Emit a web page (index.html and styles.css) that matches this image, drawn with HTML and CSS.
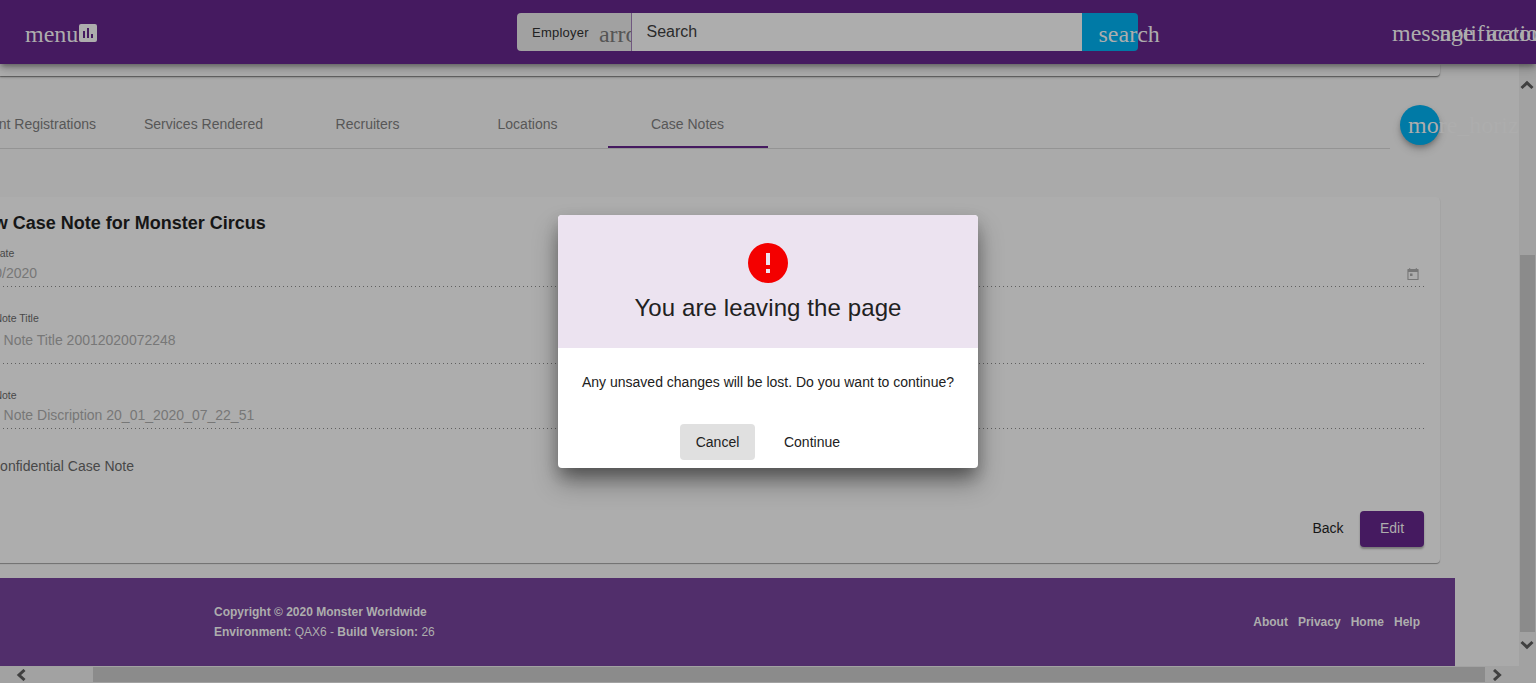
FILE: index.html
```html
<!DOCTYPE html>
<html lang="en">
<head>
<meta charset="utf-8">
<title>Case Notes</title>
<link rel="stylesheet" href="styles.css">
</head>
<body>
<header class="topbar">
  <div class="brand">
    <span class="ligature">menu</span>
    <svg class="brand-icon" viewBox="3 3 18 18"><path fill="#adadad" fill-rule="evenodd" d="M19 3H5a2 2 0 0 0-2 2v14a2 2 0 0 0 2 2h14a2 2 0 0 0 2-2V5a2 2 0 0 0-2-2zM9 17H7v-7h2v7zm4 0h-2V7h2v10zm4 0h-2v-4h2v4z"/></svg>
  </div>
  <div class="searchbox">
    <div class="scope"><span>Employer</span><i class="ligature">arrow_drop_down</i></div>
    <div class="query">Search</div>
    <div class="go ligature">search</div>
  </div>
  <nav class="actions ligature"><span>message</span><span>notifications</span><span>account_circle</span></nav>
</header>
<div class="viewport">
  <main class="page">
    <div class="upper-card"></div>
    <div class="tabrow">
      <nav class="tabs">
        <a class="tab first">Event Registrations</a><a class="tab">Services Rendered</a><a class="tab">Recruiters</a><a class="tab">Locations</a><a class="tab active">Case Notes</a>
      </nav>
      <div class="fab ligature">more_horiz</div>
    </div>
    <section class="card">
      <h2>View Case Note for Monster Circus</h2>
      <div class="field date"><label>Note Date</label><div class="value">01/20/2020</div>
        <svg class="calendar" viewBox="0 0 12 12"><path fill="#777" fill-rule="evenodd" d="M2.2 0h1v1h5.600V0h1v1H11c.4 0 .6.2.6.6v9.800c0 .4-.2.6-.6.6H1c-.4 0-.6-.2-.6-.6V1.600C.4 1.200.6 1 1 1h1.200zM1.500 4v6.900h9V4zM3 5.500h2.500V8H3z"/></svg>
      </div>
      <div class="field title"><label>Case Note Title</label><div class="value">Case Note Title 20012020072248</div></div>
      <div class="field note"><label>Case Note</label><div class="value">Case Note Discription 20_01_2020_07_22_51</div></div>
      <div class="confidential">Confidential Case Note</div>
      <div class="buttons"><span class="back">Back</span><span class="edit">Edit</span></div>
    </section>
    <footer class="footer">
      <div class="copyright"><b>Copyright © 2020 Monster Worldwide</b><br><b>Environment:</b> QAX6 - <b>Build Version:</b> 26</div>
      <nav class="links"><a>About</a><a>Privacy</a><a>Home</a><a>Help</a></nav>
    </footer>
  </main>
  <aside class="vbar">
    <svg class="chev" viewBox="0 0 14 10"><path d="M1.500 8 7 2.800 12.500 8"/></svg>
    <div class="vthumb"></div>
    <svg class="chev" viewBox="0 0 14 10"><path d="M1.500 2 7 7.200 12.500 2"/></svg>
  </aside>
</div>
<div class="hbar">
  <svg class="arrow" viewBox="0 0 10 12"><path d="M8.500 1 3 6l5.500 5"/></svg>
  <div class="hthumb"></div>
  <svg class="arrow" viewBox="0 0 10 12"><path d="M2 1l5.500 5L2 11"/></svg>
</div>
<div class="dialog">
  <div class="dialog-head">
    <svg class="alert" viewBox="2 2 20 20"><path fill="#f40000" d="M12 2a10 10 0 1 0 0 20 10 10 0 0 0 0-20zm1 15h-2v-2h2v2zm0-4h-2V7h2v6z"/></svg>
    <div class="dialog-title">You are leaving the page</div>
  </div>
  <p>Any unsaved changes will be lost. Do you want to continue?</p>
  <div class="dialog-actions"><span class="cancel">Cancel</span><span class="continue">Continue</span></div>
</div>
</body>
</html>
```
FILE: styles.css
```css
* { box-sizing: border-box; }
body { margin: 0; width: 1536px; height: 683px; overflow: hidden; display: flex; flex-direction: column; background: #aaa; color: #161616; font: 14px/20px "Liberation Sans", Arial, sans-serif; }
svg { display: block; flex: none; }
.ligature { font: 24px/24px "Liberation Serif", "Times New Roman", serif; color: #adadad; white-space: nowrap; }

.topbar { position: relative; z-index: 2; flex: none; height: 64px; display: flex; background: #451a60; box-shadow: 0 3px 5px -1px rgba(0,0,0,.32), 0 6px 10px rgba(0,0,0,.14), 0 1px 10px rgba(0,0,0,.09); }
.brand { width: 517px; padding: 22px 0 0 25px; display: flex; }
.brand-icon { width: 18px; height: 18px; margin: 2px 0 0 1px; }
.searchbox { width: 621px; height: 38px; margin-top: 13px; display: flex; }
.scope { width: 115px; padding: 9px 0 0 15px; display: flex; overflow: hidden; background: #a1a1a1; border-right: 1px solid #705880; border-radius: 4px 0 0 4px; color: #222; font-size: 13px; letter-spacing: .25px; }
.scope span { padding-top: 1px; }
.scope .ligature { color: #555; margin-left: 10px; letter-spacing: 0; }
.query { width: 450px; padding: 9px 14.500px; background: #adadad; color: #2b2b2b; font-size: 16px; }
.go { width: 56px; padding: 9px 0 0 16.500px; background: #007aa6; border-radius: 0 4px 4px 0; }
.actions { display: flex; width: 144px; overflow: hidden; margin-left: 254px; padding-top: 21px; }
.actions span { flex: none; width: 47.500px; }

.viewport { flex: none; height: 602px; display: flex; }
.page { width: 1519px; height: 602px; overflow: hidden; }
.upper-card { width: 1440px; height: 12px; background: #adadad; border-radius: 0 0 4px 0; box-shadow: 0 1px 1px rgba(0,0,0,.4), 0 2px 2px rgba(0,0,0,.12); }
.tabrow { display: flex; margin-top: 24px; height: 49px; }
.tabs { width: 1390px; height: 49px; display: flex; border-bottom: 1px solid #949494; }
.tab { flex: none; width: 160px; height: 48px; padding: 14px 1px 0 0; text-align: center; color: #575757; }
.tab:nth-child(2) { width: 168px; }
.tab.first { width: 120px; padding-right: 24px; display: flex; justify-content: flex-end; white-space: nowrap; }
.tab.active { border-bottom: 2px solid #451a60; }
.fab { width: 40px; height: 40px; margin: 5px 0 0 10px; padding: 8px 0 0 8px; border-radius: 50%; background: #007aa6; box-shadow: 0 3px 5px -1px rgba(0,0,0,.25), 0 5px 8px rgba(0,0,0,.16); }
.card { width: 1473px; height: 366px; margin: 48px 0 0 -33px; padding: 16px 16px 0 0; background: #adadad; border-radius: 0 4px 4px 0; box-shadow: 0 1px 1px rgba(0,0,0,.35); }
.card h2 { margin: 0; height: 31px; font: bold 18px/20px "Liberation Sans", Arial, sans-serif; }
.field { position: relative; width: 1457px; color: #777; }
.field::after { content: ""; display: block; height: 1px; background: repeating-linear-gradient(90deg, #606060 0 1.300px, #adadad 1.300px 4px); }
.field label { display: block; height: 18px; font-size: 10.500px; line-height: 18px; color: #484848; }
.date .value { height: 24px; line-height: 22px; }
.calendar { position: absolute; right: 5px; top: 24px; width: 12px; height: 12px; }
.title { margin-top: 22px; }
.title .value { height: 36px; line-height: 26px; }
.note { margin-top: 22px; }
.note .value { height: 24px; line-height: 22px; }
.confidential { margin: 27px 0 0 23px; color: #484848; }
.buttons { display: flex; justify-content: flex-end; margin-top: 35px; }
.back { width: 64px; height: 36px; line-height: 35px; text-align: center; }
.edit { width: 64px; height: 36px; line-height: 35px; text-align: center; background: #451a60; color: #adadad; border-radius: 4px; box-shadow: 0 2px 2px rgba(0,0,0,.3); }
.footer { width: 1455px; height: 88px; margin-top: 15px; display: flex; justify-content: space-between; padding: 24px 35px 0 214px; background: #512e6b; color: #adadad; font-size: 12px; }
.links { display: flex; gap: 10px; padding-top: 10px; font-weight: bold; }

.vbar { width: 17px; padding: 16px 0 0 1px; background: #a2a2a2; display: flex; flex-direction: column; align-items: flex-start; }
.vthumb { width: 15px; height: 377px; margin: 165px 0 8px; background: #8b8b8b; }
.chev { width: 14px; height: 10px; }
.vbar path, .hbar path { fill: none; stroke: #404040; stroke-width: 3; }
.hbar { height: 17px; display: flex; padding: 1px 0 0 16px; background: #a2a2a2; }
.hthumb { width: 1392px; height: 15px; margin: 0 7px 0 67px; background: #8b8b8b; }
.arrow { width: 10px; height: 12px; margin-top: 2px; }

.dialog { position: absolute; z-index: 3; left: 558px; top: 215px; width: 420px; height: 253px; background: #fff; border-radius: 4px; box-shadow: 0 11px 15px -7px rgba(0,0,0,.25), 0 15px 24px rgba(0,0,0,.34), 0 6px 14px 2px rgba(0,0,0,.1); text-align: center; color: #212121; }
.dialog-head { height: 133px; padding-top: 28px; background: #ece3f0; border-radius: 4px 4px 0 0; }
.alert { width: 40px; height: 40px; margin: 0 auto; }
.dialog-title { margin-top: 9px; font-size: 24px; line-height: 32px; letter-spacing: .1px; }
.dialog p { margin: 24px 0 32px; white-space: nowrap; }
.dialog-actions { display: flex; padding-left: 122px; line-height: 36px; }
.cancel { width: 75px; height: 36px; background: #e0e0e0; border-radius: 4px; }
.continue { width: 114px; }
```
